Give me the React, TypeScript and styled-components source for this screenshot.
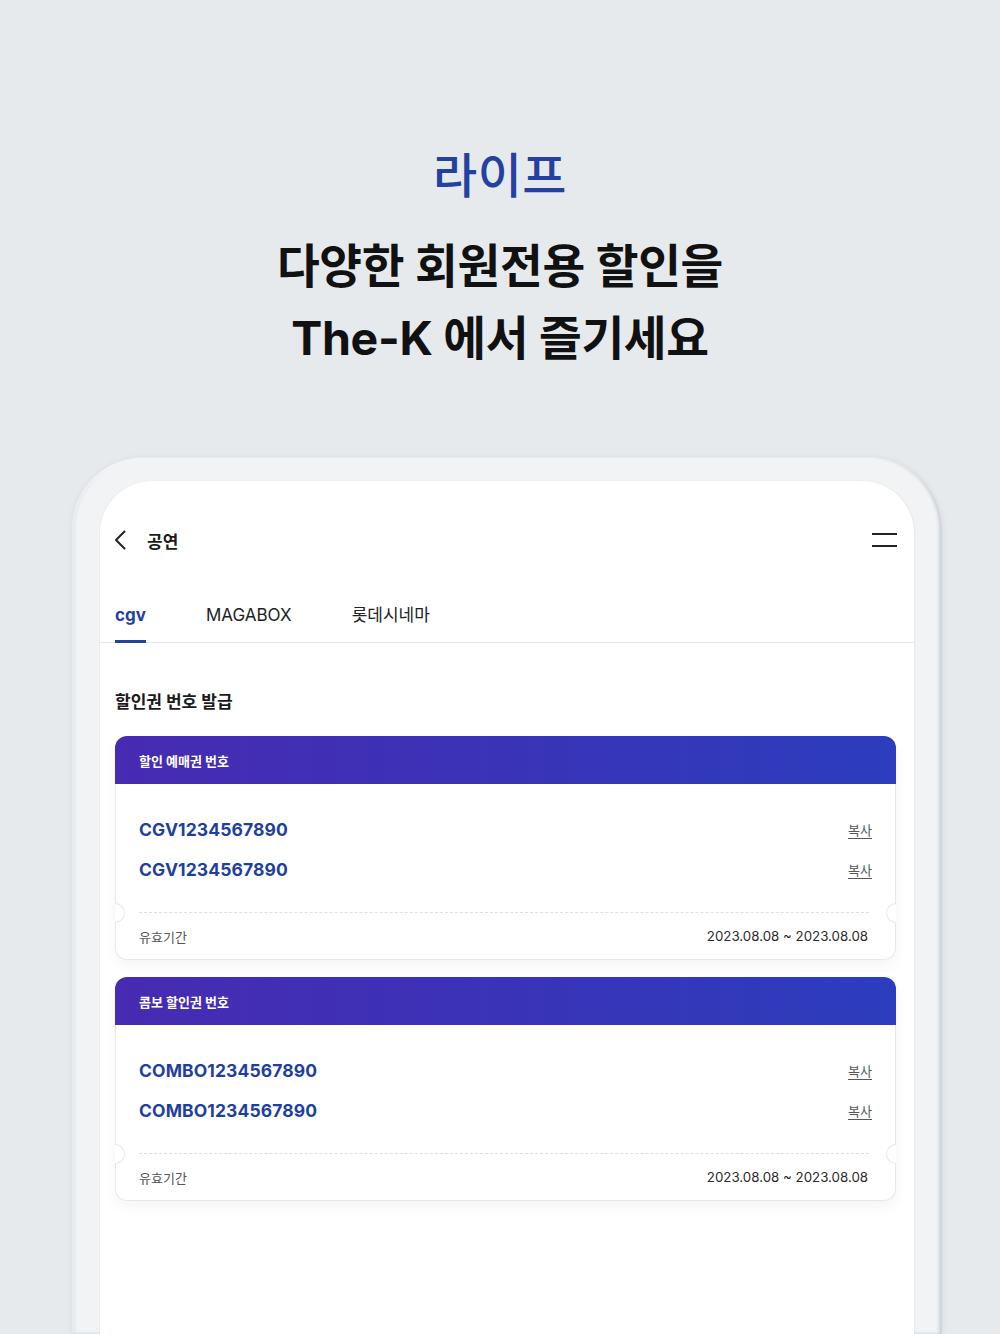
import React, { useState } from 'react'
import styled, { createGlobalStyle } from 'styled-components'

const GlobalStyle = createGlobalStyle`
  html, body {
    margin: 0;
    padding: 0;
    overflow: hidden;
    background: #e7eaed;
  }
  body {
    font-family: 'Inter', 'Noto Sans CJK KR', sans-serif;
    color: #111;
  }
  * {
    box-sizing: border-box;
  }
`

const Page = styled.div`
  height: 1334px;
  overflow: hidden;
  display: flex;
  flex-direction: column;
  align-items: center;
  padding-top: 147px;
  background: #e7eaed;
`

const Eyebrow = styled.h2`
  margin: 0;
  font-size: 48px;
  line-height: 57px;
  font-weight: 500;
  color: #2441a0;
  letter-spacing: 0.5px;
`

const Headline = styled.h1`
  margin: 26px 0 0;
  font-size: 46.5px;
  line-height: 72px;
  font-weight: 700;
  text-align: center;
  color: #111;
  letter-spacing: -0.3px;
`

const Device = styled.div`
  align-self: flex-start;
  margin: 83px 0 0 72px;
  width: 870px;
  flex: 1 0 auto;
  padding: 24px 28px 0 28px;
  border-radius: 72px 72px 0 0;
  background: #f1f3f5;
  box-shadow: inset 3px 0 3px rgba(150, 160, 170, 0.12),
    inset -3px 0 3px rgba(130, 140, 155, 0.32),
    inset 0 2px 2px rgba(255, 255, 255, 0.9), 0 1px 6px rgba(0, 0, 0, 0.07);
  display: flex;
`

const Screen = styled.div`
  flex: 1;
  background: #fff;
  border-radius: 52px 52px 0 0;
  box-shadow: -1px 0 1px rgba(0, 0, 0, 0.03), 1px 0 2px rgba(0, 0, 0, 0.05);
`

const TopBar = styled.div`
  display: flex;
  align-items: center;
  height: 40px;
  margin-top: 39px;
  padding: 0 17px 0 14px;
`

const BackButton = styled.button`
  display: flex;
  align-items: center;
  justify-content: center;
  width: 12px;
  height: 20px;
  padding: 0;
  border: 0;
  background: none;
`

const TopTitle = styled.span`
  margin-left: 21px;
  font-size: 17px;
  font-weight: 700;
  color: #1b1b1b;
`

const MenuButton = styled.button`
  margin-left: auto;
  width: 25px;
  height: 14px;
  padding: 0;
  border: 0;
  background: none;
  display: flex;
  flex-direction: column;
  justify-content: space-between;

  span {
    display: block;
    height: 2px;
    background: #222;
  }
`

const TabBar = styled.div`
  display: flex;
  gap: 60px;
  padding: 0 15px;
  border-bottom: 1px solid #e4e6e9;
`

const Tab = styled.button<{ $active: boolean }>`
  padding: 43px 0 13px;
  margin-bottom: -1px;
  border: 0;
  border-bottom: 3px solid ${({ $active }) => ($active ? '#2441a0' : 'transparent')};
  background: none;
  font-family: inherit;
  font-size: 17px;
  line-height: 24px;
  font-weight: ${({ $active }) => ($active ? 700 : 400)};
  color: ${({ $active }) => ($active ? '#2441a0' : '#222')};
  cursor: pointer;
`

const Content = styled.div`
  padding: 47px 18px 0 15px;
`

const SectionTitle = styled.h3`
  margin: 0 0 22px;
  font-size: 17px;
  line-height: 24px;
  font-weight: 700;
  color: #1b1b1b;
`

const CardList = styled.div`
  display: flex;
  flex-direction: column;
  gap: 17px;
`

const Card = styled.div`
  border-radius: 12px;
  box-shadow: 0 6px 14px rgba(0, 0, 0, 0.045);
`

const CardHeader = styled.div`
  height: 48px;
  display: flex;
  align-items: center;
  padding: 0 24px;
  border-radius: 12px 12px 0 0;
  background: linear-gradient(90deg, #472bb2 0%, #3a33b8 50%, #2c3dbd 100%);
  color: #fff;
  font-size: 13px;
  font-weight: 700;
`

const CardBody = styled.div`
  position: relative;
  border: 1px solid #e6e8eb;
  border-top: 0;
  border-radius: 0 0 12px 12px;
  background: #fff;
  padding: 33px 0 13px;
`

const CodeList = styled.div`
  display: flex;
  flex-direction: column;
  gap: 16px;
  padding: 0 23px;
`

const CodeRow = styled.div`
  display: flex;
  align-items: center;
  justify-content: space-between;
  height: 24px;
`

const Code = styled.span`
  font-size: 17.5px;
  font-weight: 700;
  color: #1f3f9e;
  letter-spacing: 0.1px;
`

const CopyLink = styled.button`
  padding: 0;
  border: 0;
  background: none;
  font-family: inherit;
  font-size: 13px;
  color: #555;
  text-decoration: underline;
  text-underline-offset: 3px;
  cursor: pointer;
`

const Perforation = styled.div`
  position: relative;
  margin: 31px 26px 0 23px;
  border-top: 1px dashed #dcdfe3;
`

const Notch = styled.span<{ $side: 'left' | 'right' }>`
  position: absolute;
  top: -10px;
  width: 10px;
  height: 20px;
  background: #fff;
  border: 1px solid #e6e8eb;
  ${({ $side }) =>
    $side === 'left'
      ? `left: -24px; border-left: 0; border-radius: 0 10px 10px 0;`
      : `right: -27px; border-right: 0; border-radius: 10px 0 0 10px;`}
`

const ValidRow = styled.div`
  display: flex;
  align-items: center;
  justify-content: space-between;
  height: 20px;
  margin-top: 13px;
  padding: 0 27px 0 23px;
  font-size: 13px;
  color: #555;
`

const ValidDate = styled.span`
  color: #2a2a2a;
  font-size: 13.3px;
`

type Coupon = {
  title: string
  codes: string[]
  period: string
}

const coupons: Coupon[] = [
  {
    title: '할인 예매권 번호',
    codes: ['CGV1234567890', 'CGV1234567890'],
    period: '2023.08.08 ~ 2023.08.08',
  },
  {
    title: '콤보 할인권 번호',
    codes: ['COMBO1234567890', 'COMBO1234567890'],
    period: '2023.08.08 ~ 2023.08.08',
  },
]

const tabs = ['cgv', 'MAGABOX', '롯데시네마']

function CouponCard({ coupon }: { coupon: Coupon }) {
  return (
    <Card>
      <CardHeader>{coupon.title}</CardHeader>
      <CardBody>
        <CodeList>
          {coupon.codes.map((code, i) => (
            <CodeRow key={i}>
              <Code>{code}</Code>
              <CopyLink>복사</CopyLink>
            </CodeRow>
          ))}
        </CodeList>
        <Perforation>
          <Notch $side="left" />
          <Notch $side="right" />
        </Perforation>
        <ValidRow>
          <span>유효기간</span>
          <ValidDate>{coupon.period}</ValidDate>
        </ValidRow>
      </CardBody>
    </Card>
  )
}

export default function App() {
  const [active, setActive] = useState(0)

  return (
    <>
      <GlobalStyle />
      <Page>
        <Eyebrow>라이프</Eyebrow>
        <Headline>
          다양한 회원전용 할인을
          <br />
          The-K 에서 즐기세요
        </Headline>

        <Device>
          <Screen>
            <TopBar>
              <BackButton aria-label="뒤로">
                <svg width="12" height="20" viewBox="0 0 12 20" fill="none">
                  <polyline
                    points="10.5,1.5 2,10 10.5,18.5"
                    stroke="#222"
                    strokeWidth="2"
                    strokeLinecap="round"
                    strokeLinejoin="round"
                  />
                </svg>
              </BackButton>
              <TopTitle>공연</TopTitle>
              <MenuButton aria-label="메뉴">
                <span />
                <span />
              </MenuButton>
            </TopBar>

            <TabBar>
              {tabs.map((t, i) => (
                <Tab key={t} $active={i === active} onClick={() => setActive(i)}>
                  {t}
                </Tab>
              ))}
            </TabBar>

            <Content>
              <SectionTitle>할인권 번호 발급</SectionTitle>
              <CardList>
                {coupons.map((c) => (
                  <CouponCard key={c.title} coupon={c} />
                ))}
              </CardList>
            </Content>
          </Screen>
        </Device>
      </Page>
    </>
  )
}
